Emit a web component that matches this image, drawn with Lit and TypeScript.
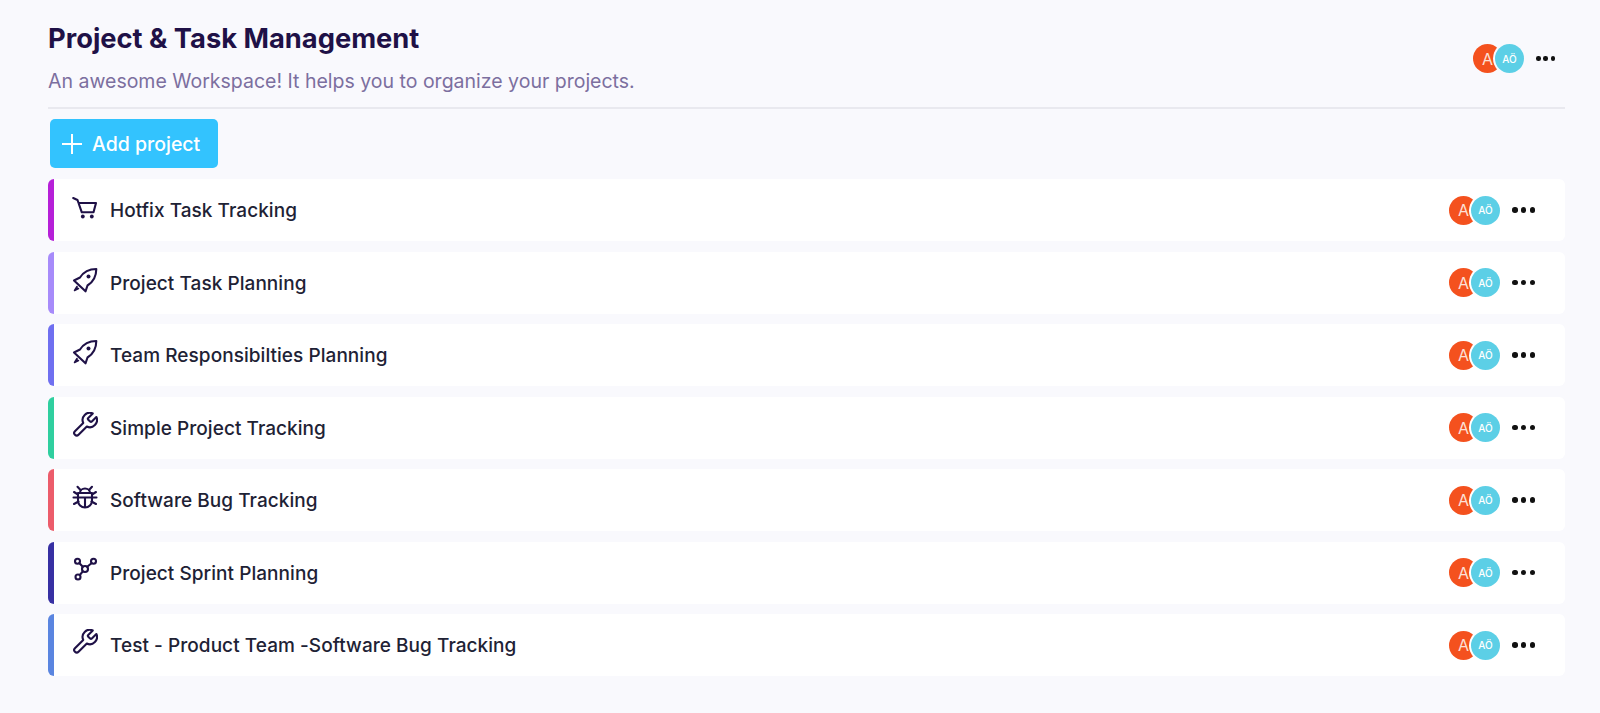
import { LitElement, html, css, svg } from "lit";
import { customElement } from "lit/decorators.js";

const wrench = svg`<g transform="translate(-1.400 -1.600) scale(1.200)"><path stroke-width="1.750" d="M14.700 6.300a1 1 0 0 0 0 1.400l1.600 1.600a1 1 0 0 0 1.400 0l3.770-3.770a6 6 0 0 1-7.940 7.940l-6.910 6.910a2.120 2.120 0 0 1-3-3l6.910-6.910a6 6 0 0 1 7.940-7.940l-3.760 3.760z"/></g>`;
const rocket = svg`<path d="M2 13.500L8 10.500C11.500 5 17 2 24.300 2C24.300 9 21 15 15.500 18.500L13.500 24.300Z"/><circle cx="16.500" cy="9.500" r="2" fill="#1f1147" stroke="none"/><path d="M5 19.500L2.500 23.500L6.500 21.500" fill="#1f1147" stroke-width="1.500"/>`;

const icons: Record<string, unknown> = {
  cart: svg`<circle cx="10.800" cy="22.500" r="1.900" fill="#1f1147" stroke="none"/><circle cx="19.800" cy="22.500" r="1.900" fill="#1f1147" stroke="none"/><path d="M1.200 4L5.500 6L9.800 18.300H21.500M6.500 9H24L21.500 18.300"/>`,
  rocket,
  tool: wrench,
  bug: svg`<path d="M5.500 2.800L8.500 6M20 2.800L17 6"/><path d="M8 9a5 4.500 0 0 1 10 0"/><path d="M6 9H20V16.500a7 7 0 0 1-14 0Z"/><path d="M13 23V13.500M6 13.500H20M1.500 13.500H6M20 13.500H24.500M2 8l4 2.500M24 8l-4 2.500M2 20l4.500-2.500M24 20l-4.500-2.500"/>`,
  graph: svg`<circle cx="5.500" cy="4.300" r="2.500"/><circle cx="21.500" cy="4.300" r="2.500"/><circle cx="13" cy="12" r="3"/><circle cx="6" cy="20" r="2.500"/><path d="M7.500 6.300L10.800 9.800M19.500 6.300L15.200 9.800M10.800 14.300L7.800 18"/>`,
};

const rows = [
  { name: "Hotfix Task Tracking", icon: "cart", color: "#b620d8" },
  { name: "Project Task Planning", icon: "rocket", color: "#a78bfa" },
  { name: "Team Responsibilties Planning", icon: "rocket", color: "#6f6ff0" },
  { name: "Simple Project Tracking", icon: "tool", color: "#2fcf9f" },
  { name: "Software Bug Tracking", icon: "bug", color: "#ec5c6b" },
  { name: "Project Sprint Planning", icon: "graph", color: "#3730a3" },
  { name: "Test - Product Team -Software Bug Tracking", icon: "tool", color: "#5a85e0" },
];

@customElement("app-root")
export class AppRoot extends LitElement {
  static styles = css`
    :host {
      display: block;
      min-height: 713px;
      background: #f9f9fd;
      font-family: "Inter", "Noto Sans", sans-serif;
      box-sizing: border-box;
      padding: 0 35px 0 48px;
    }
    .header {
      display: flex;
      justify-content: space-between;
      align-items: flex-start;
      height: 107px;
      border-bottom: 2px solid #e9e9ef;
    }
    h1 {
      margin: 0;
      padding-top: 22px;
      font-size: 27.300px;
      line-height: 34px;
      font-weight: 700;
      color: #1f1147;
    }
    p {
      margin: 12.600px 0 0;
      font-size: 19.500px;
      line-height: 24px;
      color: #7c6f9f;
    }
    .header-right {
      display: flex;
      align-items: center;
      align-self: center;
      padding-right: 10px;
      margin-top: 10px;
    }
    .btn {
      margin: 10px 0 11px 2px;
      width: 168px;
      height: 49px;
      border: 0;
      border-radius: 5px;
      background: #33c3fe;
      color: #fff;
      font: 500 19.500px "Inter", sans-serif;
      display: flex;
      align-items: center;
      gap: 9px;
      padding: 0 0 0 11px;
      box-sizing: border-box;
    }
    .btn svg { width: 22px; height: 22px; fill: none; stroke: #fff; stroke-width: 2; }
    .list { display: flex; flex-direction: column; gap: 10.500px; }
    .row {
      display: flex;
      align-items: center;
      height: 62px;
      background: #fff;
      border-radius: 6px;
      border-left: 6px solid;
      padding: 0 30px 0 18px;
      box-sizing: border-box;
    }
    .icon {
      width: 26px;
      height: 26px;
      flex: none;
      fill: none;
      stroke: #1f1147;
      stroke-width: 2.100;
      stroke-linecap: round;
      stroke-linejoin: round;
      margin-top: -6px;
    }
    .name { margin-left: 12px; padding-top: 1px; font-size: 19px; font-weight: 500; color: #1e2235; flex: 1; letter-spacing: 0.050px; }
    .avatars { display: flex; align-items: center; }
    .a, .b {
      width: 29px;
      height: 29px;
      border-radius: 50%;
      display: flex;
      align-items: center;
      justify-content: center;
      color: #fff;
      flex: none;
    }
    .a { background: #f4511e; font-size: 16px; color: #fde0d6; }
    .b {
      background: #5ccfe6;
      font-size: 10px;
      font-weight: 500;
      margin-left: -7px;
      box-shadow: 0 0 0 2px #fff;
      position: relative;
    }
    .header-right .b { box-shadow: 0 0 0 2px #f9f9fd; }
    .more { width: 23px; margin-left: 12px; display: flex; justify-content: space-between; }
    .more i { width: 5.500px; height: 5.500px; border-radius: 50%; background: #111; display: block; }
    .header-right .more { width: 19px; }
    .header-right .more i { width: 4.500px; height: 4.500px; }
  `;

  private avatars() {
    return html`<div class="avatars"><span class="a">A</span><span class="b">AÖ</span></div>
      <div class="more"><i></i><i></i><i></i></div>`;
  }

  render() {
    return html`
      <div class="header">
        <div>
          <h1>Project &amp; Task Management</h1>
          <p>An awesome Workspace! It helps you to organize your projects.</p>
        </div>
        <div class="header-right">${this.avatars()}</div>
      </div>
      <button class="btn"><svg viewBox="0 0 22 22"><path d="M11 1v20M1 11h20"/></svg>Add project</button>
      <div class="list">
        ${rows.map(
          (r) => html`<div class="row" style="border-left-color:${r.color}">
            <svg class="icon" viewBox="0 0 26 26">${icons[r.icon]}</svg>
            <span class="name">${r.name}</span>
            ${this.avatars()}
          </div>`
        )}
      </div>
    `;
  }
}
